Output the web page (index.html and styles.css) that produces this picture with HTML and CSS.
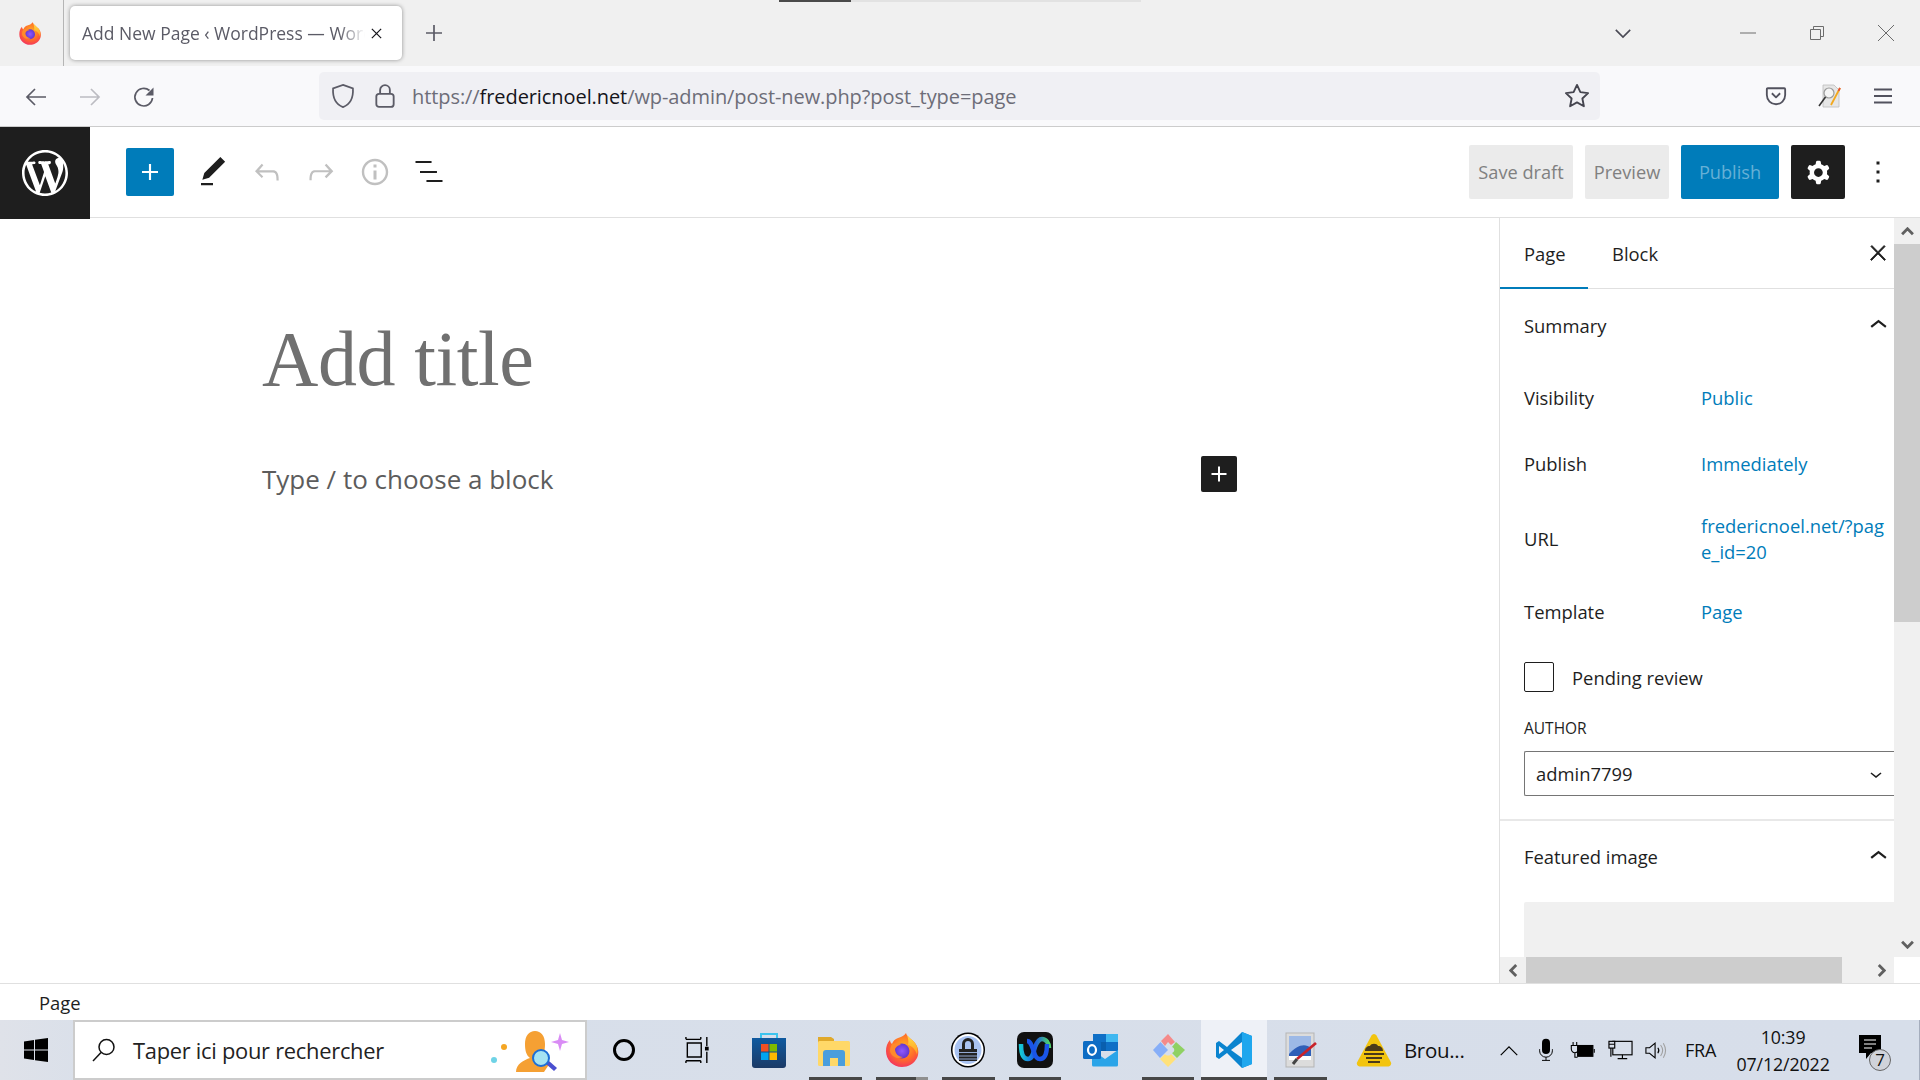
FILE: index.html
```html
<!DOCTYPE html>
<html lang="en">
<head>
<meta charset="utf-8">
<title>Add New Page ‹ WordPress</title>
<link rel="stylesheet" href="styles.css">
</head>
<body>
<svg class="defs" width="0" height="0" aria-hidden="true">
  <defs>
    <radialGradient id="ffBody" cx="55%" cy="40%" r="70%">
      <stop offset="0" stop-color="#ffb21f"/><stop offset=".55" stop-color="#ff6a2b"/><stop offset="1" stop-color="#f0246e"/>
    </radialGradient>
    <linearGradient id="ffFlame" x1="0" y1="0" x2="0" y2="1">
      <stop offset="0" stop-color="#ffe54a"/><stop offset="1" stop-color="#ff9a1f"/>
    </linearGradient>
    <radialGradient id="ffCore" cx="50%" cy="50%" r="60%">
      <stop offset="0" stop-color="#9059ff"/><stop offset="1" stop-color="#5b2fc4"/>
    </radialGradient>
    <linearGradient id="storeBg" x1="0" y1="0" x2="0" y2="1">
      <stop offset="0" stop-color="#0f5aa0"/><stop offset="1" stop-color="#1b3a66"/>
    </linearGradient>
    <linearGradient id="wxA" x1="0" y1="0" x2="1" y2="0">
      <stop offset="0" stop-color="#16c7d6"/><stop offset=".5" stop-color="#1a55e8"/><stop offset="1" stop-color="#4dd36a"/>
    </linearGradient>
    <symbol id="firefox" viewBox="0 0 36 36">
      <path d="M22 1c1 4 6 6 9 10 4 5 4 11 2 15-3 6-9 9-15 9C9 35 2 28 2 19c0-4 1-8 4-11 0 2 1 3 2 4 1-3 3-5 6-6 3-1 6-2 8-5z" fill="url(#ffBody)"/>
      <path d="M22 1c1 4 6 6 9 10 3 4 3 8 2 12-1-5-5-9-9-10 1-4 0-8-2-12z" fill="url(#ffFlame)"/>
      <circle cx="18" cy="19" r="7.5" fill="url(#ffCore)"/>
      <path d="M8 12c3-1 7-1 9 1-3 0-5 2-6 4 0 5 4 8 8 8-6 3-12-1-13-6 0-3 1-5 2-7z" fill="#ff8a2b"/>
    </symbol>
  </defs>
</svg>

<div class="load-strip"><span class="load-done"></span></div>

<div class="app">
  <header class="tabbar">
    <div class="ff-slot"><svg class="ff-small"><use href="#firefox"/></svg></div>
    <div class="tab">
      <span class="tab-title">Add New Page ‹ WordPress — Word</span>
      <svg class="i-tabx" viewBox="0 0 14 14"><path d="M2 2l10 10M12 2L2 12"/></svg>
    </div>
    <svg class="i-newtab" viewBox="0 0 18 18"><path d="M9 1v16M1 9h16"/></svg>
    <div class="spring"></div>
    <svg class="i-tablist" viewBox="0 0 20 12"><path d="M2 2l8 8 8-8"/></svg>
    <div class="wincontrols">
      <svg class="i-win" viewBox="0 0 16 16"><path d="M0 8h16"/></svg>
      <svg class="i-win" viewBox="0 0 16 16"><path d="M1.5 4.500h10v10h-10zM4.500 4.500v-3h10v10h-3"/></svg>
      <svg class="i-win" viewBox="0 0 16 16"><path d="M0 0l16 16M16 0L0 16"/></svg>
    </div>
  </header>

  <nav class="navbar">
    <svg class="i-nav" viewBox="0 0 24 24"><path d="M22 12H3M11 4l-8 8 8 8"/></svg>
    <svg class="i-nav dim" viewBox="0 0 24 24"><path d="M2 12h19M13 4l8 8-8 8"/></svg>
    <svg class="i-nav" viewBox="0 0 24 24"><path d="M20.500 13a8.800 8.800 0 1 1-3-7.500"/><path class="solid" d="M21.500 2.500v8h-8z"/></svg>
    <div class="urlbar">
      <svg class="i-shield" viewBox="0 0 24 24"><path d="M12 2.500l8.500 3c.500 8-2 13.500-8.500 16-6.500-2.500-9-8-8.500-16z"/></svg>
      <svg class="i-lock" viewBox="0 0 24 24"><rect x="4" y="10" width="16" height="12" rx="2.500"/><path d="M7.500 10V6.500a4.500 4.500 0 0 1 9 0V10"/></svg>
      <span class="url"><span class="url-dim">https://</span>fredericnoel.net<span class="url-dim">/wp-admin/post-new.php?post_type=page</span></span>
      <svg class="i-star" viewBox="0 0 24 24"><path d="M12 2.500l2.900 6.200 6.600.8-4.900 4.600 1.300 6.700-5.900-3.300-5.900 3.300 1.300-6.700L2.500 9.500l6.600-.8z"/></svg>
    </div>
    <div class="nav-right">
      <svg class="i-pocket" viewBox="0 0 24 24"><path d="M3 3.500h18a1 1 0 0 1 1 1V11a10 10 0 0 1-20 0V4.500a1 1 0 0 1 1-1z"/><path d="M7.500 9l4.500 4.500L16.500 9"/></svg>
      <svg class="i-ext" viewBox="0 0 24 24">
        <path d="M5 1h11l5 5v17H5z" fill="#e6e6e6" stroke="#bdbdbd" stroke-width=".8"/>
        <circle cx="11" cy="9" r="5" fill="#f5f5f5" stroke="#9a9a9a" stroke-width="1.200"/>
        <path d="M7.500 13L1 22" stroke="#333" stroke-width="1.600"/>
        <path d="M22 4L13 21" stroke="#f2a81d" stroke-width="1.800"/>
        <path d="M22 4l-1.500 2.800" stroke="#e2533b" stroke-width="1.800"/>
      </svg>
      <svg class="i-menu" viewBox="0 0 18 16"><path d="M0 1.500h18M0 8h18M0 14.500h18"/></svg>
    </div>
  </nav>

  <div class="wp-toolbar">
    <div class="wp-logo">
      <svg viewBox="0 0 20 20"><path d="M20 10c0-5.510-4.490-10-10-10C4.480 0 0 4.490 0 10c0 5.520 4.480 10 10 10 5.510 0 10-4.480 10-10zM7.780 15.370L4.370 6.220c.55-.02 1.170-.08 1.170-.08.5-.06.44-1.130-.06-1.110 0 0-1.450.11-2.370.11-.18 0-.37 0-.58-.01C4.120 2.690 6.870 1.110 10 1.110c2.330 0 4.450.87 6.050 2.340-.68-.11-1.650.39-1.650 1.580 0 .74.45 1.360.9 2.100.35.61.55 1.360.55 2.460 0 1.490-1.400 5-1.400 5l-3.030-8.370c.54-.02.82-.17.82-.17.5-.05.44-1.250-.06-1.220 0 0-1.440.12-2.380.12-.87 0-2.330-.12-2.330-.12-.5-.03-.56 1.200-.06 1.220l.92.08 1.260 3.410zM17.410 10c.24-.64.74-1.870.43-4.250.7 1.290 1.050 2.710 1.050 4.250 0 3.290-1.730 6.240-4.400 7.780.97-2.590 1.940-5.200 2.920-7.780zM6.100 18.090C3.120 16.650 1.110 13.530 1.110 10c0-1.300.23-2.480.72-3.590C3.250 10.300 4.670 14.200 6.100 18.090zm4.030-6.630l2.580 6.980c-.86.29-1.760.45-2.710.45-.79 0-1.570-.11-2.290-.33.81-2.380 1.620-4.740 2.420-7.100z"/></svg>
    </div>
    <div class="tools-left">
      <button class="btn-add"><svg viewBox="0 0 24 24"><path d="M18 11.200h-5.200V6h-1.600v5.200H6v1.600h5.200V18h1.600v-5.200H18z"/></svg></button>
      <svg class="i-tool" viewBox="0 0 24 24"><path d="M20.100 5.100L16.900 2 6.200 12.700l-1.300 4.400 4.500-1.300L20.100 5.100zM4 20.800h8v-1.500H4v1.500z"/></svg>
      <svg class="i-tool off" viewBox="0 0 24 24"><path d="M18.300 11.700c-.6-.6-1.400-.9-2.300-.9H6.700l2.900-3.300-1.100-1-4.500 5L8.500 16l1-1-2.700-2.700H16c.5 0 .9.2 1.300.5 1 1 1 3.400 1 4.500v.3h1.500v-.2c0-1.500 0-4.300-1.500-5.700z"/></svg>
      <svg class="i-tool off" viewBox="0 0 24 24"><path d="M15.600 6.500l-1.100 1 2.900 3.300H8c-.9 0-1.700.3-2.300.9-1.400 1.500-1.400 4.200-1.400 5.600v.2h1.500v-.3c0-1.100 0-3.500 1-4.500.3-.3.7-.5 1.300-.5h9.200L14.500 15l1.100 1.100 4.600-4.600-4.600-5z"/></svg>
      <svg class="i-tool off" viewBox="0 0 24 24"><path d="M12 3.200c-4.800 0-8.800 3.900-8.800 8.800 0 4.800 3.900 8.800 8.800 8.800 4.800 0 8.800-3.900 8.800-8.800 0-4.800-4-8.800-8.800-8.800zm0 16c-4 0-7.200-3.300-7.200-7.200C4.800 8 8 4.800 12 4.800s7.200 3.300 7.200 7.200c0 4-3.200 7.200-7.200 7.200zM11 17h2v-6h-2v6zm0-8h2V7h-2v2z"/></svg>
      <svg class="i-tool" viewBox="0 0 24 24"><path d="M3 4.700h10.700V6H3zM6 11.400h11.300v1.300H6zM10.300 17.400H21v1.300H10.300z"/></svg>
    </div>
    <div class="tools-right">
      <button class="btn-gray btn-save">Save draft</button>
      <button class="btn-gray btn-preview">Preview</button>
      <button class="btn-publish">Publish</button>
      <button class="btn-gear"><svg viewBox="0 0 24 24"><path fill-rule="evenodd" d="M10.289 4.836A1 1 0 0 1 11.275 4h1.306a1 1 0 0 1 .987.836l.244 1.466c.787.26 1.503.679 2.108 1.218l1.393-.522a1 1 0 0 1 1.216.437l.653 1.130a1 1 0 0 1-.23 1.273l-1.148.944a6.025 6.025 0 0 1 0 2.435l1.149.946a1 1 0 0 1 .23 1.272l-.653 1.130a1 1 0 0 1-1.216.437l-1.394-.522c-.605.54-1.320.958-2.108 1.218l-.244 1.466a1 1 0 0 1-.987.836h-1.306a1 1 0 0 1-.986-.836l-.244-1.466a5.995 5.995 0 0 1-2.108-1.218l-1.394.522a1 1 0 0 1-1.217-.436l-.653-1.131a1 1 0 0 1 .23-1.272l1.149-.946a6.026 6.026 0 0 1 0-2.435l-1.148-.944a1 1 0 0 1-.23-1.272l.653-1.131a1 1 0 0 1 1.216-.437l1.393.522a5.994 5.994 0 0 1 2.108-1.218l.244-1.466zM14.929 12a3 3 0 1 1-6 0 3 3 0 0 1 6 0z"/></svg></button>
      <svg class="i-kebab" viewBox="0 0 24 24"><path d="M13 19h-2v-2h2v2zm0-6h-2v-2h2v2zm0-6h-2V5h2v2z"/></svg>
    </div>
  </div>

  <main class="workspace">
    <section class="editor">
      <div class="title-ph">Add title</div>
      <div class="block-row">
        <span class="block-ph">Type / to choose a block</span>
        <button class="btn-inline"><svg viewBox="0 0 24 24"><path d="M18 11.200h-5.200V6h-1.600v5.200H6v1.600h5.200V18h1.600v-5.200H18z"/></svg></button>
      </div>
    </section>

    <aside class="sidebar">
      <div class="side-upper">
        <div class="side-panel">
          <div class="side-tabs">
            <span class="side-tab active">Page</span>
            <span class="side-tab">Block</span>
            <svg class="i-x" viewBox="0 0 24 24"><path d="M13 11.800l6.100-6.300-1-1-6.100 6.200-6.100-6.200-1 1 6.100 6.300-6.500 6.700 1 1 6.500-6.600 6.500 6.600 1-1z"/></svg>
          </div>
          <div class="section-head head-summary">
            <span>Summary</span>
            <svg class="i-chev" viewBox="0 0 24 24"><path d="M6.500 12.400L12 8l5.500 4.400-.9 1.200L12 10l-4.500 3.600-1-1.200z"/></svg>
          </div>
          <div class="prow p-vis"><span class="plabel">Visibility</span><span class="pval">Public</span></div>
          <div class="prow p-pub"><span class="plabel">Publish</span><span class="pval">Immediately</span></div>
          <div class="prow p-url"><span class="plabel">URL</span><span class="pval">fredericnoel.net/?pag<br>e_id=20</span></div>
          <div class="prow p-tpl"><span class="plabel">Template</span><span class="pval">Page</span></div>
          <label class="pending"><span class="checkbox"></span><span>Pending review</span></label>
          <div class="author-label">AUTHOR</div>
          <div class="select"><span>admin7799</span><svg viewBox="0 0 24 24"><path d="M17.500 11.600L12 16l-5.500-4.400.9-1.200L12 14l4.500-3.600 1 1.200z"/></svg></div>
          <div class="section-head head-featured">
            <span>Featured image</span>
            <svg class="i-chev" viewBox="0 0 24 24"><path d="M6.500 12.400L12 8l5.500 4.400-.9 1.200L12 10l-4.500 3.600-1-1.200z"/></svg>
          </div>
          <div class="featured-box"></div>
        </div>
        <div class="vscroll">
          <div class="sb-btn up"><svg viewBox="0 0 12 8"><path d="M1 6.500l5-5 5 5"/></svg></div>
          <div class="v-thumb"></div>
          <div class="v-track"></div>
          <div class="sb-btn"><svg viewBox="0 0 12 8"><path d="M1 1.500l5 5 5-5"/></svg></div>
        </div>
      </div>
      <div class="hscroll">
        <div class="sb-btn h"><svg viewBox="0 0 8 12"><path d="M6.500 1l-5 5 5 5"/></svg></div>
        <div class="h-thumb"></div>
        <div class="h-track"></div>
        <div class="sb-btn h"><svg viewBox="0 0 8 12"><path d="M1.500 1l5 5-5 5"/></svg></div>
        <div class="h-corner"></div>
      </div>
    </aside>
  </main>

  <div class="statusbar">Page</div>

  <footer class="taskbar">
    <div class="start"><svg viewBox="0 0 24 24"><path d="M0 3.400L10 2v9.500H0zM11 1.800L24 0v11.500H11zM0 12.500h10V22L0 20.600zM11 12.500h13V24l-13-1.800z"/></svg></div>
    <div class="searchbox">
      <svg class="i-search" viewBox="0 0 24 24"><circle cx="14.500" cy="9" r="7.500"/><path d="M9 14.500L1 23"/></svg>
      <span class="search-text">Taper ici pour rechercher</span>
      <svg class="i-bing" viewBox="0 0 80 44">
        <circle cx="4" cy="32" r="3" fill="#6fd3e6"/>
        <circle cx="14" cy="19" r="3" fill="#f5a623"/>
        <path d="M68 12l2-7 2 7 7 2-7 2-2 7-2-7-7-2z" fill="#d98cf5"/>
        <path d="M26 44c0-8 8-12 14-14-4-3-5-8-5-14 0-8 4-13 10-13s10 5 10 13c0 6-1 11-5 14 4 1 8 3 10 5l-6 9z" fill="#f5a033"/>
        <path d="M56 36l8 7 3-3-8-7z" fill="#4a4fd0"/>
        <circle cx="51" cy="30" r="8" fill="#a5e3f2" stroke="#1d6fd6" stroke-width="2"/>
      </svg>
    </div>
    <div class="tslot wide-a"><svg class="i-cortana" viewBox="0 0 24 24"><circle cx="12" cy="12" r="9.500"/></svg></div>
    <div class="tslot wide-b"><svg class="i-tview" viewBox="0 0 28 28"><path d="M1 2.500h16M1 2.500V0M17 2.500V0M2.500 6.500h15v15h-15zM1 25.500h16M1 25.500V28M17 25.500V28M23.500 0v10M23.500 16v12"/><rect x="21.500" y="10.500" width="4" height="4" fill="#000" stroke="none"/></svg></div>

    <div class="tslot">
      <svg class="ticon" viewBox="0 0 36 36"><path d="M10 6V2h16v4" fill="none" stroke="#3cc4ee" stroke-width="2"/><path d="M1 6h34v27a3 3 0 0 1-3 3H4a3 3 0 0 1-3-3z" fill="url(#storeBg)"/><rect x="10" y="12" width="7.500" height="7.500" fill="#f25022"/><rect x="18.500" y="12" width="7.500" height="7.500" fill="#7fba00"/><rect x="10" y="20.500" width="7.500" height="7.500" fill="#00a4ef"/><rect x="18.500" y="20.500" width="7.500" height="7.500" fill="#ffb900"/></svg>
    </div>
    <div class="tslot running">
      <svg class="ticon" viewBox="0 0 36 36"><path d="M1 5h13l3 2v24H1z" fill="#e0a92b"/><rect x="1" y="9" width="32" height="25" rx="1.500" fill="#ffd868"/><path d="M6 34V21a3 3 0 0 1 3-3h16a3 3 0 0 1 3 3v13h-7v-8h-8v8z" fill="#4a9edd"/></svg>
    </div>
    <div class="tslot running multi"><svg class="ticon" viewBox="0 0 36 36"><use href="#firefox"/></svg></div>
    <div class="tslot running">
      <svg class="ticon" viewBox="0 0 36 36"><ellipse cx="18" cy="18" rx="17" ry="17.500" fill="#000"/><ellipse cx="18" cy="18" rx="15.500" ry="16" fill="#fff"/><ellipse cx="18" cy="18" rx="13.500" ry="14" fill="#a9c3f2"/><path d="M12 17v-5a6 6 0 0 1 12 0v5h-3v-5a3 3 0 0 0-6 0v5z" fill="#222"/><path d="M9 17h18v12H9z" fill="#222"/><path d="M9 20.500h18M9 24h18M9 27h18" stroke="#9fb8e6" stroke-width=".9"/></svg>
    </div>
    <div class="tslot running">
      <svg class="ticon" viewBox="0 0 36 36"><rect width="36" height="36" rx="7" fill="#111"/><path d="M4 12c0 8 2 15 7 15s5-6 7-12c2-5 4-8 7-8 4 0 7 4 7 9" fill="none" stroke="url(#wxA)" stroke-width="4.500"/><path d="M10 9c4 0 5 6 7 11 1 4 3 7 6 7 5 0 7-7 7-15" fill="none" stroke="#1a55e8" stroke-width="4.500"/></svg>
    </div>
    <div class="tslot">
      <svg class="ticon" viewBox="0 0 36 36"><rect x="10" y="2" width="25" height="17" fill="#0f6fc6"/><rect x="23" y="2" width="12" height="8" fill="#3fb7f0"/><rect x="10" y="10" width="13" height="9" fill="#0a5fae"/><path d="M9 18l13 9 13-9v15a1.500 1.500 0 0 1-1.500 1.500h-23A1.500 1.500 0 0 1 9 33z" fill="#2aa4e8"/><rect x="0" y="9" width="18" height="18" rx="1.500" fill="#0d6cc4"/><ellipse cx="9" cy="18" rx="4" ry="4.800" fill="none" stroke="#fff" stroke-width="2.200"/></svg>
    </div>
    <div class="tslot running">
      <svg class="ticon" viewBox="0 0 36 36"><path d="M18 18L3 18l7.500-8z" fill="#86aef8"/><path d="M3 18l15 0-8 8z" fill="#86aef8"/><path d="M11 9l7-7 7 8-4 3-3-3-3 4z" fill="#f58a8a"/><path d="M26 10l9 8-8 8-5-5c3-1 3-5 0-6z" fill="#8fd163"/><path d="M10 27l5-5c1 2 5 2 6 0l5 5-8 8z" fill="#ffe17a"/></svg>
    </div>
    <div class="tslot running active">
      <svg class="ticon" viewBox="0 0 36 36"><path d="M26 0L11 15 3 9 0 11v14l3 2 8-6 15 15 10-4V4z" fill="#0a84cf"/><path d="M26 0l10 4v28l-10 4z" fill="#1fa7ee"/><path d="M26 10L15 18l11 8z" fill="#eef2f8"/><path d="M3 14l5 4-5 4z" fill="#eef2f8"/></svg>
    </div>
    <div class="tslot running">
      <svg class="ticon" viewBox="0 0 36 36"><rect x="3" y="1" width="28" height="34" fill="#dcdcdc" stroke="#b5b5b5"/><rect x="6" y="4" width="22" height="24" fill="#2f5fb8"/><path d="M6 4h22v12c-6-5-14-3-22 6z" fill="#9db9e6"/><path d="M6 24h22v4H6z" fill="#fff"/><path d="M33 11L14 27" stroke="#c8222a" stroke-width="2.800"/><path d="M14 27l-4 5" stroke="#444" stroke-width="3"/></svg>
    </div>
    <div class="tslot-app">
      <svg class="i-warn" viewBox="0 0 36 34"><path d="M18 1a3 3 0 0 1 2.500 1.500l14.500 27A3 3 0 0 1 32.500 33.500h-29A3 3 0 0 1 1 29.500l14.500-27A3 3 0 0 1 18 1z" fill="#f2c40f"/><path d="M9 18c0-3 2-5 5-5 1-3 7-3 8 0 3 0 5 2 5 5z" fill="#4a3a1a"/><path d="M8 21h20M10 25h16M12 29h12" stroke="#4a3a1a" stroke-width="1.800"/></svg>
      <span class="app-text">Brou...</span>
    </div>

    <div class="tray">
      <svg class="i-tray caret" viewBox="0 0 20 12"><path d="M1 11l9-9 9 9"/></svg>
      <svg class="i-tray mic" viewBox="0 0 20 28"><rect x="5" y="0" width="10" height="19" rx="5" fill="#000" stroke="none"/><path d="M2 13v2a8 8 0 0 0 16 0v-2M10 23v4M5 27h10"/></svg>
      <svg class="i-tray batt" viewBox="0 0 28 20"><path d="M3 1v4M7 1v4M1 5h8v4a4 4 0 0 1-8 0zM5 13v5h3"/><rect x="8" y="5" width="17" height="12" fill="#000" stroke="#000"/><path d="M26.500 9v4"/></svg>
      <svg class="i-tray net" viewBox="0 0 26 20"><rect x="5" y="1" width="20" height="14"/><path d="M15 15v4M10 19h10"/><rect x="1" y="1" width="6" height="7" fill="#d8dee9"/><path d="M1 4h6M3 8v9"/></svg>
      <svg class="i-tray vol" viewBox="0 0 24 20"><path d="M1 7h4l6-5v16l-6-5H1z"/><path d="M14 7c1.500 2 1.500 4 0 6"/><path class="faint" d="M17 4c3 4 3 8 0 12M20 2c3 5 3 11 0 16"/></svg>
    </div>
    <span class="lang">FRA</span>
    <div class="clock"><span>10:39</span><span>07/12/2022</span></div>
    <div class="notif">
      <svg class="i-notif" viewBox="0 0 22 24"><path d="M0 0h22v18h-10l-5 6v-6H0z" fill="#000"/><path d="M5 5h12M5 9h12M5 13h8" stroke="#fff" stroke-width="1"/></svg>
      <span class="badge">7</span>
    </div>
    <div class="show-desk"></div>
  </footer>
</div>
</body>
</html>
```

FILE: styles.css
```css
* { box-sizing: border-box; }
html, body { margin: 0; height: 100%; overflow: hidden; }
body { font-family: "Open Sans", "Noto Sans", sans-serif; color: #1e1e1e; background: #fff; position: relative; }
svg { display: block; flex: none; }
button { border: 0; padding: 0; margin: 0; font: inherit; display: flex; align-items: center; justify-content: center; }
.defs { position: absolute; }

.load-strip { position: absolute; left: 779px; top: 0; width: 362px; height: 2px; background: #e2e2e2; z-index: 3; }
.load-done { display: block; width: 72px; height: 2px; background: #4a4a4a; }

.app { display: flex; flex-direction: column; height: 1080px; }

/* browser tab strip */
.tabbar { height: 66px; background: #f0f0f0; display: flex; align-items: center; flex: none; }
.ff-slot { width: 64px; height: 66px; border-right: 1px solid #b5b5b5; display: flex; align-items: center; padding-left: 18px; }
.ff-small { width: 24px; height: 25px; }
.tab { width: 332px; height: 54px; margin-left: 6px; background: #fff; border-radius: 5px; box-shadow: 0 0 4px rgba(0,0,0,.4); display: flex; align-items: center; padding-left: 12px; position: relative; }
.tab-title { flex: none; font-size: 17.500px; color: #5b5b66; white-space: nowrap; -webkit-mask-image: linear-gradient(90deg, #000 88%, transparent 97%); mask-image: linear-gradient(90deg, #000 88%, transparent 97%); }
.i-tabx { position: absolute; right: 19px; top: 21px; width: 13px; height: 13px; fill: none; stroke: #15141a; stroke-width: 1.300; }
.i-newtab { width: 18px; height: 18px; margin-left: 23px; fill: none; stroke: #5b5b66; stroke-width: 1.700; }
.spring { flex: 1; }
.i-tablist { width: 18px; height: 11px; fill: none; stroke: #4a4a55; stroke-width: 1.800; margin-right: 108px; }
.wincontrols { display: flex; gap: 53px; margin-right: 26px; }
.i-win { width: 16px; height: 16px; fill: none; stroke: #6c6c6c; stroke-width: 1; }

/* navigation bar */
.navbar { height: 61px; background: #f9f9fb; border-bottom: 1px solid #ccc; display: flex; align-items: center; padding-left: 24px; flex: none; }
.i-nav { width: 24px; height: 24px; margin: 2px 30px 0 0; fill: none; stroke: #5b5b66; stroke-width: 1.700; }
.i-nav.dim { stroke: #bcbcc2; }
.i-nav .solid { fill: #5b5b66; stroke: none; }
.urlbar { width: 1281px; height: 48px; margin-left: 133px; background: #f0f0f4; border-radius: 5px; display: flex; align-items: center; padding-left: 10px; }
.i-shield { width: 28px; height: 28px; fill: none; stroke: #5b5b66; stroke-width: 1.500; }
.i-lock { width: 26px; height: 26px; margin-left: 15px; fill: none; stroke: #5b5b66; stroke-width: 1.700; }
.url { flex: 1; margin-left: 14px; font-size: 20px; letter-spacing: -.08px; color: #15141a; white-space: nowrap; }
.url-dim { color: #6d6d78; }
.i-star { width: 28px; height: 28px; margin-right: 9px; fill: none; stroke: #45454f; stroke-width: 1.600; stroke-linejoin: round; }
.nav-right { display: flex; align-items: center; margin-left: 165px; }
.i-pocket { width: 22px; height: 22px; fill: none; stroke: #52525e; stroke-width: 2; stroke-linejoin: round; }
.i-ext { width: 24px; height: 26px; margin-left: 31px; fill: none; }
.i-menu { width: 18px; height: 16px; margin-left: 32px; fill: none; stroke: #52525e; stroke-width: 1.800; }

/* editor toolbar */
.wp-toolbar { height: 91px; display: flex; align-items: center; border-bottom: 1px solid #e0e0e0; flex: none; }
.wp-logo { width: 90px; height: 92px; align-self: flex-start; background: #1e1e1e; display: flex; align-items: center; justify-content: center; position: relative; }
.wp-logo svg { width: 46px; height: 46px; fill: #fff; }
.tools-left { display: flex; align-items: center; margin-left: 36px; }
.btn-add { width: 48px; height: 48px; background: #007cba; border-radius: 2px; }
.btn-add svg { width: 32px; height: 32px; fill: #fff; }
.i-tool { width: 36px; height: 36px; margin-left: 18px; fill: #1e1e1e; }
.btn-add + .i-tool { margin-left: 21px; }
.i-tool.off { fill: #c0c0c0; }
.tools-right { margin-left: auto; display: flex; align-items: center; gap: 12px; margin-right: 24px; }
.btn-gray { height: 54px; background: #ebebeb; border-radius: 2px; color: #808080; font-size: 18.200px; }
.btn-save { width: 104px; }
.btn-preview { width: 84px; }
.btn-publish { width: 98px; height: 54px; background: #007cba; border-radius: 2px; color: #66b0d6; font-size: 18.200px; }
.btn-gear { width: 54px; height: 54px; background: #1e1e1e; border-radius: 2px; }
.btn-gear svg { width: 35px; height: 35px; fill: #fff; }
.i-kebab { width: 36px; height: 36px; margin-left: 3px; fill: #1e1e1e; }

/* workspace */
.workspace { height: 765px; display: flex; flex: none; }
.editor { flex: 1; padding: 95px 0 0 262px; }
.title-ph { font-family: "Liberation Serif", serif; font-size: 78px; line-height: 92px; color: #707070; letter-spacing: -.4px; }
.block-row { width: 975px; margin-top: 51px; display: flex; align-items: flex-start; justify-content: space-between; }
.block-ph { font-size: 26px; line-height: 36px; color: #5c5c5c; padding-top: 5px; }
.btn-inline { width: 36px; height: 36px; background: #1e1e1e; border-radius: 2px; }
.btn-inline svg { width: 30px; height: 30px; fill: #fff; }

/* sidebar */
.sidebar { width: 421px; border-left: 1px solid #e0e0e0; display: flex; flex-direction: column; }
.side-upper { flex: 1; display: flex; min-height: 0; }
.side-panel { flex: 1; overflow: hidden; font-size: 18.400px; }
.side-tabs { height: 71px; border-bottom: 1px solid #e0e0e0; display: flex; align-items: flex-start; }
.side-tab { width: 88px; height: 71px; line-height: 71px; padding-left: 24px; }
.side-tab.active { box-shadow: inset 0 -2px 0 #007cba; }
.i-x { width: 24px; height: 24px; margin: 23px 4px 0 auto; fill: #1e1e1e; stroke: #1e1e1e; stroke-width: .8; }
.section-head { display: flex; align-items: center; justify-content: space-between; padding-left: 24px; }
.head-summary { height: 72px; margin-bottom: 24px; }
.i-chev { width: 35px; height: 35px; margin-right: -2px; fill: #1e1e1e; }
.prow { display: grid; grid-template-columns: 177px 1fr; padding-left: 24px; align-items: center; }
.p-vis { height: 26px; line-height: 26px; }
.p-pub { height: 26px; line-height: 26px; margin-top: 40px; }
.p-url { height: 50px; margin-top: 36px; line-height: 25.500px; }
.p-tpl { height: 26px; line-height: 26px; margin-top: 36px; }
.pval { color: #007cba; white-space: nowrap; }
.pending { display: flex; align-items: center; gap: 18px; padding-left: 24px; margin-top: 37px; height: 30px; }
.checkbox { width: 30px; height: 30px; border: 1px solid #1e1e1e; border-radius: 2px; background: #fff; }
.author-label { padding-left: 24px; margin-top: 24px; font-size: 15.500px; line-height: 24px; }
.select { margin: 11px 0 0 24px; height: 45px; border: 1px solid #757575; border-right: 0; border-radius: 2px 0 0 2px; padding: 0 6px 0 11px; display: flex; align-items: center; justify-content: space-between; }
.select svg { width: 24px; height: 24px; fill: #1e1e1e; }
.head-featured { height: 72px; border-top: 2px solid #e8e8e8; margin-top: 23px; }
.featured-box { height: 200px; margin: 11px 0 0 24px; background: #f0f0f0; border-radius: 2px 0 0 0; }

.vscroll { width: 26px; background: #f0f0f0; display: flex; flex-direction: column; }
.sb-btn { height: 26px; flex: none; display: flex; align-items: center; justify-content: center; background: #f0f0f0; }
.sb-btn svg { width: 13px; height: 9px; fill: none; stroke: #606060; stroke-width: 2.600; }
.sb-btn.h { width: 26px; }
.sb-btn.h svg { width: 9px; height: 13px; }
.v-thumb { height: 378px; background: #cdcdcd; flex: none; }
.v-track { flex: 1; }
.hscroll { height: 26px; display: flex; background: #f0f0f0; flex: none; }
.h-thumb { width: 316px; background: #cdcdcd; }
.h-track { flex: 1; }
.h-corner { width: 26px; background: #fff; }

/* status bar */
.statusbar { height: 37px; border-top: 1px solid #e0e0e0; padding-left: 39px; line-height: 37px; font-size: 18.400px; flex: none; }

/* windows taskbar */
.taskbar { height: 60px; flex: none; display: flex; align-items: stretch; background: linear-gradient(90deg, #dfe2e9 0%, #d8dfea 6%, #d7deea 100%); color: #111; }
.start { width: 73px; display: flex; align-items: center; padding-left: 24px; }
.start svg { width: 24px; height: 24px; fill: #000; }
.searchbox { width: 514px; background: #fff; border: 2px solid #ccc; display: flex; align-items: center; padding-left: 17px; }
.i-search { width: 24px; height: 24px; fill: none; stroke: #111; stroke-width: 1.500; }
.search-text { margin-left: 17px; font-size: 21.900px; letter-spacing: -.28px; color: #222; }
.i-bing { width: 80px; height: 44px; margin-left: auto; margin-right: 15px; }
.tslot { width: 66.500px; position: relative; display: flex; align-items: center; justify-content: center; }
.wide-a { width: 74px; }
.wide-b { width: 75px; }
.i-cortana { width: 24px; height: 24px; fill: none; stroke: #000; stroke-width: 3; }
.i-tview { width: 26px; height: 26px; fill: none; stroke: #000; stroke-width: 1.500; }
.ticon { width: 36px; height: 36px; }
.tslot.running::after { content: ""; position: absolute; left: 7px; right: 7px; bottom: 0; height: 3px; background: #474747; }
.tslot.multi::before { content: ""; position: absolute; right: 7px; width: 12px; bottom: 0; height: 3px; background: #8f8f8f; z-index: 1; }
.tslot.active { background: #eef1f7; }
.tslot.active::after { left: 0; right: 0; }
.tslot-app { width: 122px; display: flex; align-items: center; padding-left: 22px; }
.i-warn { width: 36px; height: 34px; }
.app-text { margin-left: 12px; font-size: 20.500px; letter-spacing: -.3px; }
.tray { display: flex; align-items: center; margin-left: 43px; }
.i-tray { fill: none; stroke: #000; stroke-width: 1.200; }
.caret { width: 20px; height: 11px; stroke-width: 1.300; }
.mic { width: 16px; height: 26px; margin-left: 19px; }
.batt { width: 26px; height: 18px; margin-left: 16px; }
.net { width: 25px; height: 20px; margin-left: 12px; }
.vol { width: 22px; height: 19px; margin-left: 12px; }
.vol .faint { stroke: #a0a0a0; }
.lang { align-self: center; margin-left: 18px; font-size: 18px; letter-spacing: -.2px; }
.clock { width: 110px; margin-left: 12px; display: flex; flex-direction: column; align-items: center; justify-content: center; gap: 5px; font-size: 17.800px; line-height: 22px; letter-spacing: -.1px; }
.notif { width: 44px; margin-left: 15px; position: relative; display: flex; align-items: center; padding-left: 6px; }
.i-notif { width: 22px; height: 24px; margin-top: -6px; }
.badge { position: absolute; left: 16px; top: 29px; width: 22px; height: 22px; border-radius: 50%; background: #d0d3da; border: 1px solid #666; font-size: 17px; line-height: 20px; text-align: center; }
.show-desk { flex: 1; border-left: 1px solid #a5adbd; margin-left: 22px; }
```
